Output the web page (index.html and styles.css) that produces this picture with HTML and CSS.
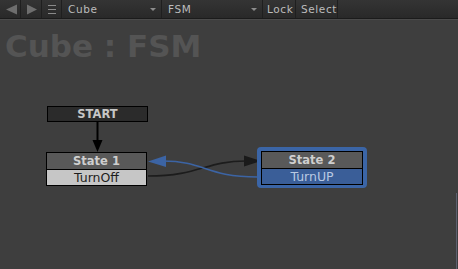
FILE: index.html
```html
<!DOCTYPE html>
<html>
<head>
    <title>Cube : FSM</title>
    <meta charset="UTF-8">
    <link rel="stylesheet" href="styles.css">
</head>
<body>
    <div class="toolbar">
        <div class="tool icon">
            <svg width="21" height="18" viewBox="0 0 21 18"><polygon points="6,9.5 17,4.5 17,14.5" fill="#6e6e6e"/></svg>
        </div>
        <div class="tool icon">
            <svg width="21" height="18" viewBox="0 0 21 18"><polygon points="6,4.5 16,9.5 6,14.5" fill="#6e6e6e"/></svg>
        </div>
        <div class="tool icon menu">
            <svg width="20" height="18" viewBox="0 0 20 18"><path d="M6 5.5h8M6 9.5h8M6 13.5h8" stroke="#8a8a8a" stroke-width="1.2"/></svg>
        </div>
        <div class="tool drop cube">Cube<span class="caret"></span></div>
        <div class="tool drop fsm">FSM<span class="caret"></span></div>
        <div class="tool lock">Lock</div>
        <div class="tool select">Select</div>
        <div class="tool rest"></div>
    </div>

    <div class="canvas">
        <h1 class="title">Cube : FSM</h1>

        <svg class="edges" width="458" height="249" viewBox="0 20 458 249">
            <!-- start -> state 1 -->
            <line x1="97.5" y1="121" x2="97.5" y2="142" stroke="#000" stroke-width="2"/>
            <polygon points="92.5,140 102.5,140 97.5,152" fill="#000"/>
            <!-- state 1 -> state 2 -->
            <path d="M148 176 C 200 176 205 161 246 161" fill="none" stroke="#1c1c1c" stroke-width="1.6"/>
            <polygon points="244,155.5 261,161 244,166.5" fill="#1a1a1a"/>
            <!-- state 2 -> state 1 -->
            <path d="M258 177 C 205 177 205 161 163 161" fill="none" stroke="#3c64a4" stroke-width="1.6"/>
            <polygon points="166,155.5 148,161.5 166,167" fill="#3c64a4"/>
        </svg>

        <div class="node start" style="left:47px; top:86px;">
            <div class="head">START</div>
        </div>

        <div class="node state" style="left:46px; top:132px;">
            <div class="head">State 1</div>
            <div class="body">TurnOff</div>
        </div>

        <div class="selected" style="left:257px; top:127px;">
            <div class="node state active">
                <div class="head">State 2</div>
                <div class="body">TurnUP</div>
            </div>
        </div>

        <div class="scroll-edge"></div>
    </div>
</body>
</html>
```

FILE: styles.css
```css
html, body {
    margin: 0;
    padding: 0;
}
body {
    width: 458px;
    height: 269px;
    overflow: hidden;
    background-color: #3e3e3e;
    font-family: 'DejaVu Sans', Verdana, sans-serif;
}
.toolbar {
    display: flex;
    height: 18px;
    background: linear-gradient(#343434, #292929);
    border-bottom: 1px solid #1b1b1b;
    box-shadow: 0 1px 0 #4b4b4b;
}
.tool {
    height: 18px;
    border-right: 1px solid #1f1f1f;
    box-sizing: border-box;
    color: #bcbcbc;
    font-size: 10.5px;
    line-height: 18px;
    letter-spacing: 0.6px;
}
.icon {
    width: 21px;
}
.icon svg {
    display: block;
}
.menu {
    width: 20px;
}
.drop {
    position: relative;
    padding-left: 6px;
}
.cube {
    width: 100px;
}
.fsm {
    width: 101px;
}
.caret {
    position: absolute;
    right: 5px;
    top: 8px;
    width: 0;
    height: 0;
    border-left: 3px solid transparent;
    border-right: 3px solid transparent;
    border-top: 3px solid #8c8c8c;
}
.lock {
    width: 33px;
    padding-left: 4px;
}
.select {
    width: 42px;
    padding-left: 5px;
}
.rest {
    flex: 1;
    border-right: none;
}
.canvas {
    position: relative;
    height: 249px;
    margin-top: 1px;
}
.title {
    margin: 0;
    padding: 8px 0 0 5px;
    font-size: 31px;
    font-weight: bold;
    color: #545454;
    line-height: 36px;
}
.edges {
    position: absolute;
    left: 0;
    top: 0;
}
.node {
    position: absolute;
    width: 101px;
    border: 1px solid #000;
    box-sizing: border-box;
    text-align: center;
}
.head {
    height: 16px;
    line-height: 16px;
    font-size: 11.5px;
    font-weight: bold;
    color: #cfcfcf;
    background-color: #595959;
}
.start .head {
    height: 14px;
    line-height: 14px;
    background-color: #2b2b2b;
    color: #c6c6c6;
}
.body {
    height: 15px;
    line-height: 15px;
    font-size: 12.5px;
    border-top: 1px solid #000;
    background-color: #c6c6c6;
    color: #1e1e1e;
}
.selected {
    position: absolute;
    width: 110px;
    height: 41px;
    box-sizing: border-box;
    border: 4px solid #3b65a6;
    border-radius: 4px;
}
.selected .node {
    position: static;
    width: 102px;
}
.active .body {
    background-color: #3a5e98;
    color: #b9c9e2;
}
.scroll-edge {
    position: absolute;
    right: 1px;
    top: 173px;
    bottom: 0;
    width: 1px;
    background-color: #5d6070;
}
```
